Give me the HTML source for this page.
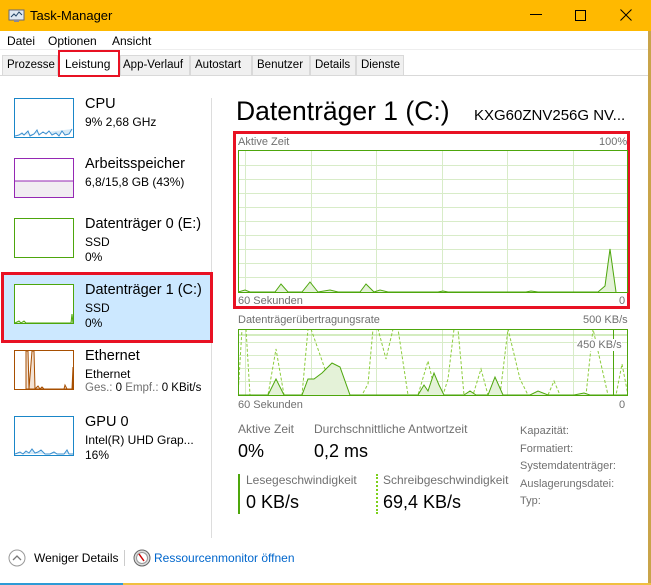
<!DOCTYPE html>
<html><head><meta charset="utf-8"><style>
*{margin:0;padding:0;box-sizing:border-box}
body{width:651px;height:585px;overflow:hidden;background:#fff;font-family:"Liberation Sans",sans-serif;position:relative;color:#000}
.a{position:absolute;white-space:nowrap}
.title{left:0;top:0;width:651px;height:31px;background:#ffb900}
.tab{position:absolute;top:55px;height:20px;background:#f0f0f0;border:1px solid #d9d9d9;border-bottom:none;font-size:11.5px;padding:3px 0 0 4px;white-space:nowrap;overflow:hidden}
.g{color:#707070}
</style></head><body>
<div class="a title"></div>
<svg class="a" style="left:8px;top:8px" width="18" height="16"><rect x="1" y="2" width="15" height="10" fill="#dfe9f2" stroke="#667"/><polyline points="3,9 6,6 8,8 11,4 14,7" fill="none" stroke="#246" stroke-width="1"/><rect x="6" y="12" width="5" height="2" fill="#889"/></svg>
<div class="a" style="left:30px;top:8px;font-size:13px">Task-Manager</div>
<div class="a" style="left:530px;top:14px;width:12px;height:1px;background:#000"></div>
<div class="a" style="left:575px;top:10px;width:11px;height:11px;border:1px solid #000"></div>
<svg class="a" style="left:620px;top:9px" width="12" height="12"><path d="M0.5 0.5L11.5 11.5M11.5 0.5L0.5 11.5" stroke="#000"/></svg>
<div class="a" style="left:648px;top:31px;width:3px;height:554px;background:#c9a44a"></div>
<div class="a" style="left:7px;top:34px;font-size:12px">Datei</div>
<div class="a" style="left:48px;top:34px;font-size:12px">Optionen</div>
<div class="a" style="left:112px;top:34px;font-size:12px">Ansicht</div>
<div class="a" style="left:0;top:49px;width:648px;height:1px;background:#eee"></div>
<div class="a" style="left:0;top:75px;width:648px;height:1px;background:#d9d9d9"></div>
<div class="tab" style="left:2px;width:56px">Prozesse</div>
<div class="tab" style="left:120px;width:70px;padding-left:2px">App-Verlauf</div>
<div class="tab" style="left:190px;width:62px">Autostart</div>
<div class="tab" style="left:252px;width:58px">Benutzer</div>
<div class="tab" style="left:310px;width:46px">Details</div>
<div class="tab" style="left:356px;width:48px">Dienste</div>
<div class="a" style="left:58px;top:50px;width:62px;height:27px;background:#fff;border:2px solid #e81123;font-size:12px;padding:5px 0 0 5px">Leistung</div>

<div class="a" style="left:211px;top:98px;width:1px;height:440px;background:#ddd"></div>
<svg class="a" style="left:14px;top:98px" width="60" height="40"><rect x="0.5" y="0.5" width="59" height="39" fill="#fff" stroke="#1a86c8"/><polyline points="1,38 5,37 8,35 10,37 14,33 16,38 20,36 23,32 25,37 29,34 32,36 35,33 38,37 42,35 45,38 48,33 51,37 55,36 58,31" fill="#d6eaf7" stroke="#3b8fcf" stroke-width="1"/></svg>
<div class="a" style="left:85px;top:96px;font-size:14.5px">CPU</div>
<div class="a" style="left:85px;top:115px;font-size:12px">9% 2,68 GHz</div>
<svg class="a" style="left:14px;top:158px" width="60" height="40"><rect x="0.5" y="0.5" width="59" height="39" fill="#fff" stroke="#9528b4"/><rect x="1" y="23" width="58" height="16" fill="#f1edf2"/><line x1="1" y1="23" x2="59" y2="23" stroke="#9528b4"/></svg>
<div class="a" style="left:85px;top:156px;font-size:14.5px">Arbeitsspeicher</div>
<div class="a" style="left:85px;top:175px;font-size:12px">6,8/15,8 GB (43%)</div>
<svg class="a" style="left:14px;top:218px" width="60" height="40"><rect x="0.5" y="0.5" width="59" height="39" fill="#fff" stroke="#4da60c"/></svg>
<div class="a" style="left:85px;top:216px;font-size:14.5px">Datenträger 0 (E:)</div>
<div class="a" style="left:85px;top:235px;font-size:12px">SSD</div>
<div class="a" style="left:85px;top:250px;font-size:12px">0%</div>
<div class="a" style="left:1px;top:272px;width:212px;height:71px;background:#cce8ff;border:3px solid #e81123"></div>
<svg class="a" style="left:14px;top:284px" width="60" height="40"><rect x="0.5" y="0.5" width="59" height="39" fill="#fff" stroke="#4da60c"/><polyline points="1,39 5,37 7,39 10,37 12,39 57,39 58,30 59,39" fill="#e0f0d0" stroke="#4da60c"/></svg>
<div class="a" style="left:85px;top:282px;font-size:14.5px">Datenträger 1 (C:)</div>
<div class="a" style="left:85px;top:301px;font-size:12px">SSD</div>
<div class="a" style="left:85px;top:316px;font-size:12px">0%</div>
<svg class="a" style="left:14px;top:350px" width="60" height="40"><rect x="0.5" y="0.5" width="59" height="39" fill="#fff" stroke="#a74f01"/><polygon points="12,39 12,1 14,1 15,39 18,1 20,1 21,39 24,36 26,39 28,37 30,39 50,39 51,35 53,39 58,39 59,17 59,39" fill="#f3e3d6" stroke="#a74f01"/></svg>
<div class="a" style="left:85px;top:348px;font-size:14.5px">Ethernet</div>
<div class="a" style="left:85px;top:367px;font-size:12px">Ethernet</div>
<div class="a" style="left:85px;top:382px;font-size:11.5px"><span class="g">Ges.:</span> 0 <span class="g">Empf.:</span> 0 KBit/s</div>
<svg class="a" style="left:14px;top:416px" width="60" height="40"><rect x="0.5" y="0.5" width="59" height="39" fill="#fff" stroke="#1a86c8"/><polyline points="1,38 6,36 9,38 12,35 15,37 18,33 21,37 24,36 27,34 31,38 36,38 40,36 43,38 50,38 53,34 55,38 59,38" fill="#d6eaf7" stroke="#3b8fcf"/></svg>
<div class="a" style="left:85px;top:414px;font-size:14.5px">GPU 0</div>
<div class="a" style="left:85px;top:433px;font-size:12px">Intel(R) UHD Grap...</div>
<div class="a" style="left:85px;top:448px;font-size:12px">16%</div>

<div class="a" style="left:236px;top:96px;font-size:26.5px">Datenträger 1 (C:)</div>
<div class="a" style="left:474px;top:107px;font-size:15px">KXG60ZNV256G NV...</div>
<div class="a" style="left:233px;top:131px;width:397px;height:178px;border:3px solid #e81123"></div>
<div class="a g" style="left:238px;top:136px;font-size:11px">Aktive Zeit</div>
<div class="a g" style="left:599px;top:136px;font-size:11px">100%</div>
<svg class="a" style="left:238px;top:150px" width="390" height="143">
<g stroke="#d8ecc8" stroke-width="1">
<line x1="0" y1="15.5" x2="390" y2="15.5"/><line x1="0" y1="29.5" x2="390" y2="29.5"/><line x1="0" y1="43.5" x2="390" y2="43.5"/><line x1="0" y1="57.5" x2="390" y2="57.5"/><line x1="0" y1="71.5" x2="390" y2="71.5"/><line x1="0" y1="85.5" x2="390" y2="85.5"/><line x1="0" y1="99.5" x2="390" y2="99.5"/><line x1="0" y1="113.5" x2="390" y2="113.5"/><line x1="0" y1="127.5" x2="390" y2="127.5"/>
<line x1="7.5" y1="0" x2="7.5" y2="143"/><line x1="73.5" y1="0" x2="73.5" y2="143"/><line x1="138.5" y1="0" x2="138.5" y2="143"/><line x1="204.5" y1="0" x2="204.5" y2="143"/><line x1="269.5" y1="0" x2="269.5" y2="143"/><line x1="335.5" y1="0" x2="335.5" y2="143"/>
</g>
<polyline points="0,142 7,140 12,142 37,142 43,134 50,142 64,142 72,132 80,142 92,140 100,142 122,142 128,134 136,142 142,140 150,142 200,142 205,141 210,142 288,142 293,141 300,142 360,142 367,136 372,99 378,142" fill="#e4f2d8" stroke="#4da60c"/>
<rect x="0.5" y="0.5" width="389" height="142" fill="none" stroke="#4da60c"/>
</svg>
<div class="a g" style="left:238px;top:295px;font-size:11px">60 Sekunden</div>
<div class="a g" style="left:619px;top:295px;font-size:11px">0</div>

<div class="a g" style="left:238px;top:314px;font-size:11px">Datenträgerübertragungsrate</div>
<div class="a g" style="left:583px;top:314px;font-size:11px">500 KB/s</div>
<svg class="a" style="left:238px;top:329px" width="390" height="67">
<g stroke="#d8ecc8"><line x1="0" y1="13.5" x2="390" y2="13.5"/><line x1="0" y1="26.5" x2="390" y2="26.5"/><line x1="0" y1="39.5" x2="390" y2="39.5"/><line x1="0" y1="52.5" x2="390" y2="52.5"/>
<line x1="7.5" y1="0" x2="7.5" y2="67"/><line x1="73.5" y1="0" x2="73.5" y2="67"/><line x1="138.5" y1="0" x2="138.5" y2="67"/><line x1="204.5" y1="0" x2="204.5" y2="67"/><line x1="269.5" y1="0" x2="269.5" y2="67"/><line x1="335.5" y1="0" x2="335.5" y2="67"/></g>
<line x1="0" y1="6" x2="390" y2="6" stroke="#a8d880"/>
<polyline points="0,66 4,0 8,0 12,66 30,66 38,20 46,66 64,66 70,0 73,0 96,66 124,66 130,55 135,0 140,0 148,30 155,0 160,0 170,66 180,66 190,32 198,66 205,66 210,50 216,0 220,0 226,66 235,66 243,40 250,66 262,66 270,0 282,50 290,66 310,66 316,52 322,66 348,66 355,0 370,66 378,66 384,35 390,66" fill="none" stroke="#8ccc3c" stroke-dasharray="3,2"/>
<polyline points="0,66 30,66 38,50 46,66 64,66 70,50 76,50 84,44 94,34 102,38 112,66 180,66 186,56 190,62 196,44 201,56 206,66 226,66 232,62 238,66 250,66 257,48 265,66 292,66 300,62 310,66 336,66 346,64 352,66 390,66" fill="#e4f2d8" stroke="#4da60c"/>
<rect x="0.5" y="0.5" width="389" height="66" fill="none" stroke="#4da60c"/>
<line x1="375.5" y1="0" x2="375.5" y2="67" stroke="#4da60c"/>
</svg>
<div class="a g" style="left:577px;top:339px;font-size:11px;background:#fff">450 KB/s</div>
<div class="a g" style="left:238px;top:399px;font-size:11px">60 Sekunden</div>
<div class="a g" style="left:619px;top:399px;font-size:11px">0</div>

<div class="a g" style="left:238px;top:422px;font-size:12px">Aktive Zeit</div>
<div class="a g" style="left:314px;top:422px;font-size:12px">Durchschnittliche Antwortzeit</div>
<div class="a" style="left:238px;top:441px;font-size:18px">0%</div>
<div class="a" style="left:314px;top:441px;font-size:18px">0,2 ms</div>
<div class="a" style="left:238px;top:474px;width:2px;height:40px;background:#4da60c"></div>
<div class="a" style="left:376px;top:474px;width:0;height:40px;border-left:2px dotted #7cd01c"></div>
<div class="a g" style="left:246px;top:473px;font-size:12px">Lesegeschwindigkeit</div>
<div class="a g" style="left:383px;top:473px;font-size:12px">Schreibgeschwindigkeit</div>
<div class="a" style="left:246px;top:492px;font-size:18px">0 KB/s</div>
<div class="a" style="left:383px;top:492px;font-size:18px">69,4 KB/s</div>
<div class="a g" style="left:520px;top:423px;font-size:11px;line-height:17.5px">Kapazität:<br>Formatiert:<br>Systemdatenträger:<br>Auslagerungsdatei:<br>Typ:</div>

<svg class="a" style="left:8px;top:549px" width="18" height="18"><circle cx="9" cy="9" r="8" fill="#fff" stroke="#999"/><path d="M5 11L9 7L13 11" fill="none" stroke="#777" stroke-width="1.3"/></svg>
<div class="a" style="left:34px;top:551px;font-size:12px">Weniger Details</div>
<div class="a" style="left:124px;top:550px;width:1px;height:16px;background:#ccc"></div>
<svg class="a" style="left:133px;top:549px" width="18" height="18"><circle cx="9" cy="9" r="8" fill="#ddd" stroke="#666"/><circle cx="9" cy="9" r="5.5" fill="#fff" stroke="#999"/><line x1="6" y1="5" x2="11" y2="12" stroke="#c00" stroke-width="1.5"/></svg>
<div class="a" style="left:154px;top:551px;font-size:12px;color:#0066cc">Ressourcenmonitor öffnen</div>
<div class="a" style="left:0;top:583px;width:123px;height:2px;background:#2d9bd6"></div>
<div class="a" style="left:123px;top:583px;width:528px;height:2px;background:#f0c040"></div>
</body></html>
